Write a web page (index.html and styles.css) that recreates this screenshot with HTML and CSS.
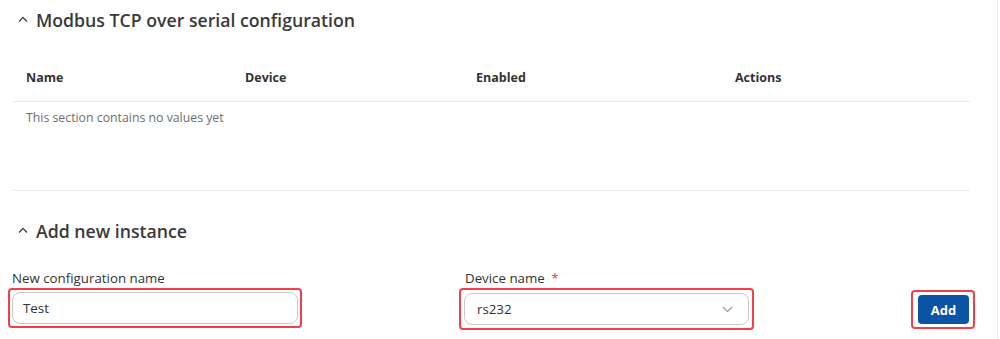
FILE: index.html
```html
<!DOCTYPE html>
<html>
<head>
<meta charset="utf-8">
<link rel="stylesheet" href="styles.css">
</head>
<body>
<div class="page">
  <div class="content">
    <section class="section">
      <div class="section-title">
        <svg class="caret" width="10" height="6" viewBox="0 0 10 6"><path d="M1 5.5 L5 1.5 L9 5.5" fill="none" stroke="#444" stroke-width="1.3"/></svg>
        <h2>Modbus TCP over serial configuration</h2>
      </div>
      <div class="table">
        <div class="thead">
          <div class="th c1">Name</div>
          <div class="th c2">Device</div>
          <div class="th c3">Enabled</div>
          <div class="th c4">Actions</div>
        </div>
        <div class="empty">This section contains no values yet</div>
      </div>
    </section>
    <section class="section add">
      <div class="section-title">
        <svg class="caret" width="10" height="6" viewBox="0 0 10 6"><path d="M1 5.5 L5 1.5 L9 5.5" fill="none" stroke="#444" stroke-width="1.3"/></svg>
        <h2>Add new instance</h2>
      </div>
      <div class="form">
        <div class="field f1">
          <label class="label">New configuration name</label>
          <div class="hl hl-input">
            <div class="input">Test</div>
          </div>
        </div>
        <div class="field f2">
          <label class="label">Device name <span class="req">*</span></label>
          <div class="hl hl-select">
            <div class="input select"><span>rs232</span>
              <svg width="11" height="7" viewBox="0 0 11 7"><path d="M1 1.2 L5.5 5.5 L10 1.2" fill="none" stroke="#999" stroke-width="1.2"/></svg>
            </div>
          </div>
        </div>
        <div class="hl hl-btn">
          <button class="btn">Add</button>
        </div>
      </div>
    </section>
  </div>
  <div class="edge"></div>
</div>
</body>
</html>
```
FILE: styles.css
```css
html, body {
  margin: 0;
  padding: 0;
  background: #fff;
}
body {
  font-family: "Open Sans", "Noto Sans", sans-serif;
  color: #333;
  width: 1000px;
  height: 339px;
  overflow: hidden;
}
.page {
  display: flex;
  height: 339px;
}
.content {
  width: 958px;
  padding-left: 12px;
}
.edge {
  margin-left: 27px;
  width: 1px;
  height: 339px;
  background: #e8ecf0;
}
.section-title {
  display: flex;
  align-items: center;
  height: 28px;
  padding-left: 6px;
}
.section:first-child .section-title {
  margin-top: 6px;
}
.caret {
  margin-right: 8px;
  margin-top: -2px;
}
h2 {
  margin: 0;
  font-size: 17.7px;
  font-weight: 600;
  color: #3a3a3a;
}
.table {
  margin-top: 30px;
}
.thead {
  display: flex;
  height: 26px;
  align-items: center;
  border-bottom: 1px solid #ebebeb;
  padding-bottom: 11px;
}
.th {
  font-size: 12.5px;
  font-weight: 700;
  color: #333;
}
.c1 { width: 219px; padding-left: 14px; }
.c2 { width: 231px; }
.c3 { width: 259px; }
.c4 { flex: 1; }
.empty {
  box-sizing: border-box;
  font-size: 12.3px;
  line-height: 18px;
  color: #6e6e6e;
  padding: 7px 0 0 14px;
  height: 89px;
  border-bottom: 1px solid #ebebeb;
}
.add .section-title {
  margin-top: 26px;
}
.form {
  display: flex;
  align-items: flex-start;
  margin-top: 24px;
}
.field {
  display: flex;
  flex-direction: column;
}
.label {
  font-size: 13.3px;
  color: #333;
  line-height: 18px;
  margin-bottom: 1px;
}
.req {
  color: #e0403a;
  margin-left: 3px;
}
.hl {
  border: 2px solid #f0414b;
  border-radius: 4px;
  padding: 2px;
  box-sizing: border-box;
}
.hl-input {
  margin-left: -4px;
  width: 294px;
}
.f2 {
  margin-left: 157px;
}
.f2 .label {
  padding-left: 6px;
}
.hl-select {
  width: 295px;
  padding: 3px;
}
.input {
  box-sizing: border-box;
  height: 32px;
  border: 1px solid #c9c9c9;
  border-radius: 8px;
  font-size: 13.3px;
  color: #333;
  display: flex;
  align-items: center;
  padding-left: 10px;
}
.select {
  padding-left: 12px;
  padding-right: 15px;
  justify-content: space-between;
}
.hl-btn {
  margin-left: 157px;
  margin-top: 21px;
  width: 65px;
  height: 39px;
  padding: 3px 4px 3px 5px;
}
.btn {
  width: 51px;
  height: 29px;
  background: #0a53a5;
  border: none;
  border-radius: 4px;
  color: #fff;
  font-family: "Open Sans", sans-serif;
  font-size: 13px;
  font-weight: 700;
  padding: 0;
}
```
